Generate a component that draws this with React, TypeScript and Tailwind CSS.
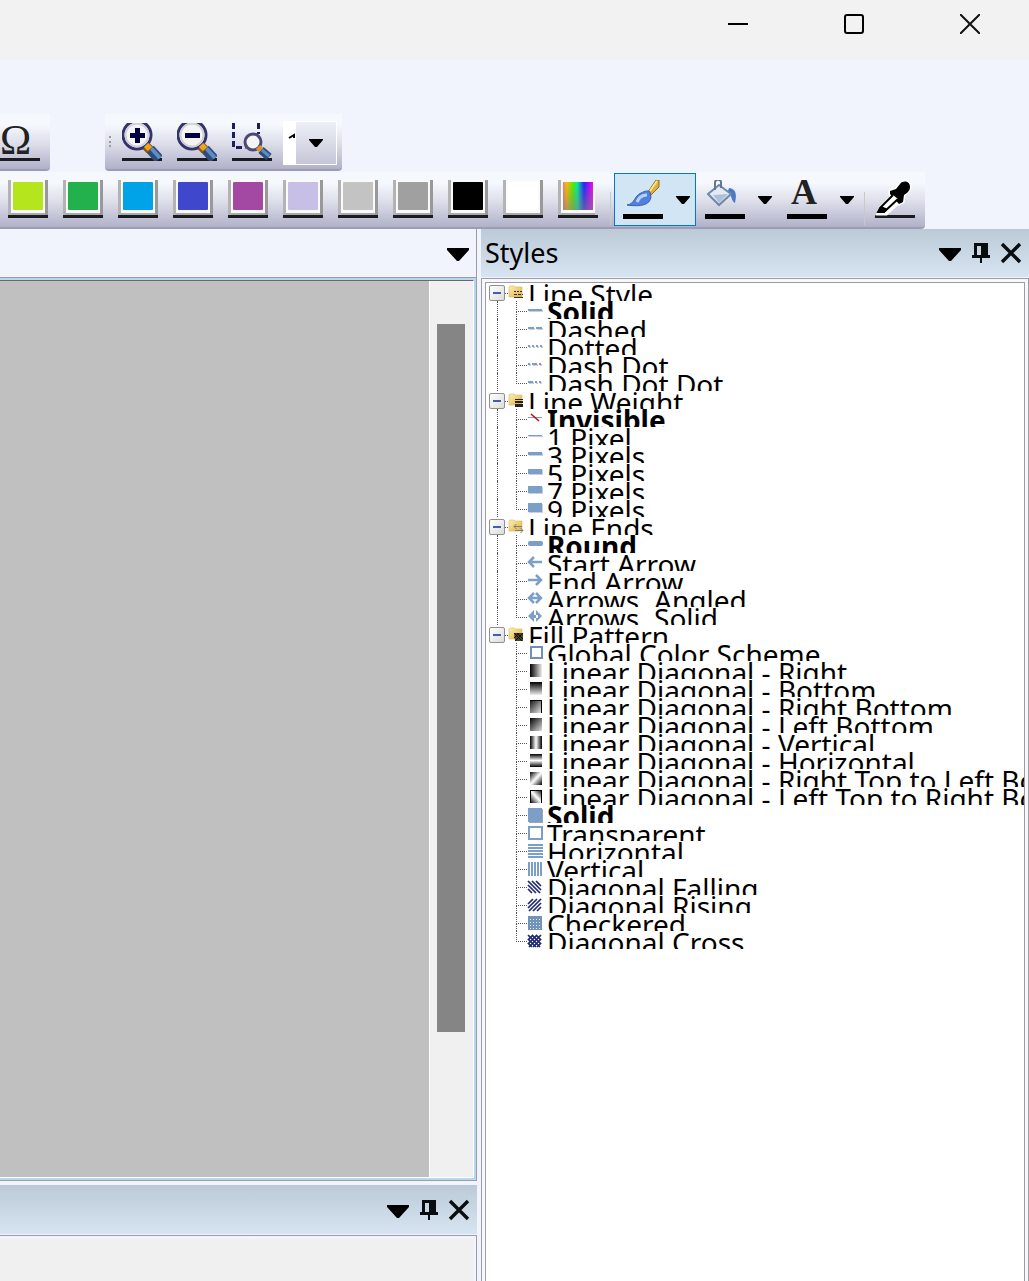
import React, { useState } from 'react';

const BLUE = '#7b9fc9';

const swatches = [
  { name: 'Lime', color: '#b5e61d' },
  { name: 'Green', color: '#22b14c' },
  { name: 'Turquoise', color: '#00a2e8' },
  { name: 'Indigo', color: '#3f48cc' },
  { name: 'Purple', color: '#a349a4' },
  { name: 'Lavender', color: '#c8bfe7' },
  { name: 'Light gray', color: '#c3c3c3' },
  { name: 'Gray', color: '#a0a0a0' },
  { name: 'Black', color: '#000000' },
  { name: 'White', color: '#ffffff' },
];

interface Item {
  label: string;
  icon: string;
  bold?: boolean;
}

interface Group {
  label: string;
  icon: string;
  items: Item[];
}

const groups: Group[] = [
  {
    label: 'Line Style',
    icon: 'style',
    items: [
      { label: 'Solid', icon: 'solid', bold: true },
      { label: 'Dashed', icon: 'dashed' },
      { label: 'Dotted', icon: 'dotted' },
      { label: 'Dash Dot', icon: 'dashdot' },
      { label: 'Dash Dot Dot', icon: 'dashdotdot' },
    ],
  },
  {
    label: 'Line Weight',
    icon: 'weight',
    items: [
      { label: 'Invisible', icon: 'invisible', bold: true },
      { label: '1 Pixel', icon: 'w1' },
      { label: '3 Pixels', icon: 'w3' },
      { label: '5 Pixels', icon: 'w5' },
      { label: '7 Pixels', icon: 'w7' },
      { label: '9 Pixels', icon: 'w9' },
    ],
  },
  {
    label: 'Line Ends',
    icon: 'ends',
    items: [
      { label: 'Round', icon: 'round', bold: true },
      { label: 'Start Arrow', icon: 'start' },
      { label: 'End Arrow', icon: 'end' },
      { label: 'Arrows, Angled', icon: 'angled' },
      { label: 'Arrows, Solid', icon: 'arrows' },
    ],
  },
  {
    label: 'Fill Pattern',
    icon: 'fill',
    items: [
      { label: 'Global Color Scheme', icon: 'global' },
      { label: 'Linear Diagonal - Right', icon: 'gRight' },
      { label: 'Linear Diagonal - Bottom', icon: 'gBottom' },
      { label: 'Linear Diagonal - Right Bottom', icon: 'gRightBottom' },
      { label: 'Linear Diagonal - Left Bottom', icon: 'gLeftBottom' },
      { label: 'Linear Diagonal - Vertical', icon: 'gVertical' },
      { label: 'Linear Diagonal - Horizontal', icon: 'gHorizontal' },
      { label: 'Linear Diagonal - Right Top to Left Bottom', icon: 'gRightTop' },
      { label: 'Linear Diagonal - Left Top to Right Bottom', icon: 'gLeftTop' },
      { label: 'Solid', icon: 'box', bold: true },
      { label: 'Transparent', icon: 'transparent' },
      { label: 'Horizontal', icon: 'hlines' },
      { label: 'Vertical', icon: 'vlines' },
      { label: 'Diagonal Falling', icon: 'falling' },
      { label: 'Diagonal Rising', icon: 'rising' },
      { label: 'Checkered', icon: 'checkered' },
      { label: 'Diagonal Cross', icon: 'cross' },
    ],
  },
];

const dashes: Record<string, [number, number][]> = {
  solid: [[1, 14]],
  dashed: [[1, 6], [9, 6]],
  dotted: [[1, 2], [5, 2], [9, 2], [13, 2]],
  dashdot: [[1, 2], [5, 5], [12, 2]],
  dashdotdot: [[1, 5], [8, 2], [12, 2]],
};

// x1, y1, x2, y2 and the colour stops
const gradients: Record<string, [number, number, number, number, string[]]> = {
  gRight: [0, 0, 1, 0, ['#000', '#eee']],
  gBottom: [0, 0, 0, 1, ['#000', '#eee']],
  gRightBottom: [0, 0, 1, 1, ['#111', '#eee']],
  gLeftBottom: [0, 0, 1, 1, ['#000', '#ddd']],
  gVertical: [0, 0, 1, 0, ['#000', '#fff', '#000']],
  gHorizontal: [0, 0, 0, 1, ['#000', '#fff', '#000']],
  gRightTop: [0, 0, 1, 1, ['#000', '#fff', '#000']],
  gLeftTop: [1, 0, 0, 1, ['#000', '#fff', '#000']],
};

function ItemShape({ icon }: { icon: string }) {
  if (dashes[icon]) {
    return (
      <>
        {dashes[icon].map(([x, w]) => (
          <g key={x}>
            <rect x={x + 1} y="9" width={w} height="2" fill="#c9cfdc" />
            <rect x={x} y="8" width={w} height="2" fill={BLUE} />
          </g>
        ))}
      </>
    );
  }
  if (/^w\d$/.test(icon)) {
    const w = Number(icon[1]);
    const y = 8 - (w - 1) / 2;
    return (
      <>
        <rect x="2" y={y + 1} width="14" height={w} fill="#c9cfdc" />
        <rect x="1" y={y} width="14" height={w} fill={BLUE} />
      </>
    );
  }
  if (gradients[icon]) {
    const [x1, y1, x2, y2, stops] = gradients[icon];
    return (
      <>
        <defs>
          <linearGradient id={icon} x1={x1} y1={y1} x2={x2} y2={y2}>
            {stops.map((c, i) => (
              <stop key={i} offset={i / (stops.length - 1)} stopColor={c} />
            ))}
          </linearGradient>
        </defs>
        <rect x="3" y="3" width="12" height="13" fill={`url(#${icon})`} />
        {icon === 'gRightBottom' && <path d="M3 3.500h12M14.500 3v13" stroke="#000" />}
        {icon === 'gLeftTop' && <path d="M3.500 16V3.500h11V16" stroke="#000" fill="none" />}
      </>
    );
  }
  switch (icon) {
    case 'invisible':
      return (
        <>
          <path d="M1 8.500h14" stroke={BLUE} />
          <path d="M4 5l8 7" stroke="#d00000" strokeWidth="1.5" shapeRendering="auto" />
        </>
      );
    case 'round':
      return <rect x="1" y="6" width="15" height="5" rx="2" fill={BLUE} shapeRendering="auto" />;
    case 'start':
      return <path d="M15 9H3M7 4L2 9l5 5" stroke={BLUE} strokeWidth="2.5" fill="none" shapeRendering="auto" />;
    case 'end':
      return <path d="M1 9h12M9 4l5 5-5 5" stroke={BLUE} strokeWidth="2.5" fill="none" shapeRendering="auto" />;
    case 'angled':
      return (
        <path d="M3 9h10M7 4L2 9l5 5M9 4l5 5-5 5" stroke={BLUE} strokeWidth="2.5" fill="none" shapeRendering="auto" />
      );
    case 'arrows':
      return <path d="M1 9l6-6v12zM15 9L9 3v12zM5 8h6v3H5z" fill={BLUE} shapeRendering="auto" />;
    case 'global':
      return <rect x="4" y="4" width="11" height="11" stroke="#6f8fbf" strokeWidth="2" fill="#fff" />;
    case 'box':
      return (
        <>
          <rect x="2" y="4" width="14" height="14" fill="#9aa8ba" />
          <rect x="1" y="3" width="14" height="14" fill={BLUE} />
        </>
      );
    case 'transparent':
      return <rect x="2" y="4" width="13" height="12" stroke={BLUE} strokeWidth="2" fill="#fff" />;
    case 'hlines':
      return <path d="M1 4h15M1 7h15M1 10h15M1 13h15M1 16h15" stroke={BLUE} strokeWidth="2" />;
    case 'vlines':
      return <path d="M2 3v14M5 3v14M8 3v14M11 3v14M14 3v14" stroke={BLUE} strokeWidth="2" />;
    case 'checkered':
      return (
        <>
          <rect x="1" y="3" width="14" height="14" fill="#7392b8" />
          <path d="M3 6h11M3 9h11M3 12h11M3 15h11" stroke="#e6edf6" strokeWidth="1" strokeDasharray="1 2" />
        </>
      );
    default:
      return (
        <g stroke="#1e2a6b" strokeWidth="1.7" shapeRendering="auto">
          {icon !== 'rising' && <path d="M1 12l4 4M1 8l8 8M1 4l12 12M5 4l9 9M9 4l5 5" />}
          {icon !== 'falling' && <path d="M14 12l-4 4M14 8l-8 8M14 4L2 16M10 4l-9 9M6 4L1 9" />}
        </g>
      );
  }
}

function ItemIcon({ icon }: { icon: string }) {
  return (
    <svg className="w-4 h-[18px] shrink-0" viewBox="0 0 16 18" shapeRendering="crispEdges" aria-hidden="true">
      <ItemShape icon={icon} />
    </svg>
  );
}

function FolderIcon({ icon }: { icon: string }) {
  return (
    <svg className="w-4 h-[18px] shrink-0" viewBox="0 0 16 18" aria-hidden="true">
      <defs>
        <linearGradient id={`folder-${icon}`} x1="0" y1="0" x2="1" y2="1">
          <stop offset="0" stopColor="#fdf0b8" />
          <stop offset="1" stopColor="#e0b03a" />
        </linearGradient>
      </defs>
      <path d="M1 4l1-1h4l1 1h7v10H1z" fill={`url(#folder-${icon})`} stroke="#d9b65a" strokeWidth="0.6" />
      {icon === 'style' && (
        <g stroke="#333" shapeRendering="crispEdges">
          <path d="M6 8.500h9" strokeDasharray="2 1" />
          <path d="M6 11.500h9" strokeDasharray="3 1" />
          <path d="M6 14.500h9" />
        </g>
      )}
      {icon === 'weight' && (
        <g stroke="#222" shapeRendering="crispEdges">
          <path d="M7 8.500h8" />
          <path d="M7 11h8" strokeWidth="2" />
          <path d="M7 14.500h8" strokeWidth="3" />
        </g>
      )}
      {icon === 'ends' && (
        <path
          d="M14 9.500H6M8.500 7L6 9.500 8.500 12M7 13.500h8M12.500 11l2.500 2.500-2.500 2.500"
          stroke="#7d7d7d"
          fill="none"
        />
      )}
      {icon === 'fill' && (
        <>
          <path d="M6 8h9v8H7z" fill="#4d431f" />
          <path d="M6 8l8 8M9 8l6 6M15 8l-8 8M11 8l-5 5" stroke="#111" />
        </>
      )}
    </svg>
  );
}

function TreeGroup({ group, last }: { group: Group; last: boolean }) {
  const [open, setOpen] = useState(true);

  return (
    <li role="treeitem" aria-expanded={open}>
      <div className="flex h-[18px] overflow-hidden">
        <button
          onClick={() => setOpen(!open)}
          aria-label={`Toggle ${group.label}`}
          className="ml-[3px] mt-[2px] w-4 h-4 shrink-0 flex items-center justify-center rounded-[2px] border border-[#8f8f8f] bg-linear-to-br from-white to-[#dcdcdc]"
        >
          <span className="w-2 h-[2px] bg-[#3f5fb0]" />
        </button>
        <span className="w-[3px] h-[11px] shrink-0 border-b border-dotted border-[#555]" />
        <FolderIcon icon={group.icon} />
        <span className="pl-1 leading-[22px]">{group.label}</span>
      </div>
      {open && (
        <ul role="group">
          {group.items.map((item, i) => (
            <li key={item.label} role="treeitem" className="flex h-[18px] overflow-hidden">
              <span
                className={`ml-[11px] w-[19px] shrink-0 border-l border-dotted ${
                  last ? 'border-transparent' : 'border-[#555]'
                }`}
              />
              <span className="w-[11px] shrink-0">
                <span className="block h-[11px] border-l border-b border-dotted border-[#555]" />
                {i < group.items.length - 1 && <span className="block h-[7px] border-l border-dotted border-[#555]" />}
              </span>
              <ItemIcon icon={item.icon} />
              <span className={`pl-1 leading-[22px] ${item.bold ? 'font-bold' : ''}`}>{item.label}</span>
            </li>
          ))}
        </ul>
      )}
    </li>
  );
}

function MenuArrow() {
  return (
    <svg className="w-6 h-5" viewBox="0 0 24 20" aria-hidden="true">
      <path d="M1 5h22v2L13 18h-2L1 7z" fill="#000" />
    </svg>
  );
}

function PanelButtons() {
  return (
    <div className="flex items-center gap-2 pr-[7px]">
      <button aria-label="Window position">
        <MenuArrow />
      </button>
      <button aria-label="Auto hide">
        <svg className="w-[22px] h-[22px]" viewBox="0 0 22 22" aria-hidden="true">
          <path d="M4 1h14v12h2v3h-8v5h-2v-5H2v-3h2zM7 4v9h4V4z" fillRule="evenodd" fill="#0a0d10" />
        </svg>
      </button>
      <button aria-label="Close panel">
        <svg className="w-[22px] h-[22px]" viewBox="0 0 22 22" aria-hidden="true">
          <path d="M2 2l18 18M20 2L2 20" stroke="#0a0d10" strokeWidth="3.4" />
        </svg>
      </button>
    </div>
  );
}

function DropArrow() {
  return (
    <svg className="w-[14px] h-2" viewBox="0 0 14 8" aria-hidden="true">
      <path d="M0 0h14v1L8 8H6L0 1z" fill="#000" />
    </svg>
  );
}

function Lens({ sign }: { sign: string }) {
  return (
    <svg className="w-10 h-[38px]" viewBox="0 0 40 38" aria-hidden="true">
      <path d="M0 36.500h40" stroke="#1b1b22" strokeWidth="3" />
      <circle cx="15" cy="12" r="14" fill="#f4f4f4" stroke="#34346a" strokeWidth="3" />
      <circle cx="15" cy="12" r="11.500" fill="none" stroke="#d0d0d8" strokeWidth="2" />
      <path d={sign} stroke="#00003f" strokeWidth="5" />
      <path d="M28 26l9 10" stroke="#2f4d7c" strokeWidth="10" />
      <path d="M29 25l9 10" stroke="#5f8cc4" strokeWidth="4" />
      <path d="M24 23l4 4" stroke="#8a5a10" strokeWidth="9" />
      <path d="M24 22l4 4" stroke="#efa420" strokeWidth="6" />
    </svg>
  );
}

function ColorTool({ label, active, children }: { label: string; active?: boolean; children: React.ReactNode }) {
  return (
    <div
      className={`flex h-[53px] w-[82px] border ${active ? 'border-[#0078d7] bg-[#d1e5f4]' : 'border-transparent'}`}
    >
      <button aria-label={label} className="pl-2 pt-[6px] flex flex-col">
        <svg className="w-10 h-[34px]" viewBox="0 0 40 34" aria-hidden="true">
          {children}
        </svg>
        <span className="block w-10 h-[5px] bg-black" />
      </button>
      <button aria-label={`${label} options`} className="flex-1 flex items-center justify-center pl-[7px]">
        <DropArrow />
      </button>
    </div>
  );
}

const bar =
  'bg-linear-to-b from-[#f5f8fd] from-20% via-[#dcdde9] via-55% to-[#b1b1c9] border-b-2 border-[#9c9cb4]';

export default function App() {
  return (
    <div className="min-h-screen flex flex-col overflow-hidden bg-[#f1f4fd] text-black font-['Noto_Sans','Open_Sans',sans-serif]">
      <header className="h-[60px] bg-[#f2f2f2] flex justify-end pb-3 pr-px">
        <button aria-label="Minimize" className="w-[116px] flex items-center justify-center">
          <svg className="w-5 h-5" viewBox="0 0 20 20" aria-hidden="true">
            <path d="M0 10h20" stroke="#000" strokeWidth="2" />
          </svg>
        </button>
        <button aria-label="Maximize" className="w-[116px] flex items-center justify-center">
          <svg className="w-5 h-5" viewBox="0 0 20 20" aria-hidden="true">
            <rect x="1" y="1" width="18" height="18" rx="2" stroke="#000" strokeWidth="2" fill="none" />
          </svg>
        </button>
        <button aria-label="Close" className="w-[116px] flex items-center justify-center">
          <svg className="w-5 h-5" viewBox="0 0 20 20" aria-hidden="true">
            <path d="M0 0l20 20M20 0L0 20" stroke="#111" strokeWidth="2" />
          </svg>
        </button>
      </header>

      <div className="pt-[54px] flex gap-[55px]">
        <div className={`w-[50px] h-[57px] rounded-br-[4px] pt-[6px] ${bar}`}>
          <button
            aria-label="Insert symbol"
            className="w-10 h-[41px] border-b-[3px] border-[#1b1b22] text-[42px] leading-[40px] font-['Liberation_Serif',serif] text-[#222] text-left"
          >
            Ω
          </button>
        </div>
        <div className={`w-[237px] h-[57px] rounded-b-[4px] flex items-start pt-[7px] ${bar}`}>
          <span className="ml-1 mt-[15px] w-[2px] h-[11px] border-l-2 border-dotted border-[#9a9aa5]" />
          <div className="flex gap-[15px] ml-[11px] pt-[2px]">
            <button aria-label="Zoom in">
              <Lens sign="M8 12.500h15M15.500 5v15" />
            </button>
            <button aria-label="Zoom out">
              <Lens sign="M8 12.500h15" />
            </button>
            <button aria-label="Zoom to selection">
              <svg className="w-10 h-[38px]" viewBox="0 0 40 38" aria-hidden="true">
                <path d="M0 36.500h40" stroke="#1b1b22" strokeWidth="3" />
                <path
                  d="M1.500 0v24.500h12M26.500 0v11"
                  stroke="#1c1c60"
                  strokeWidth="3"
                  strokeDasharray="6 3"
                  fill="none"
                />
                <circle cx="21" cy="19" r="8" fill="#f4f4f4" stroke="#4a4a74" strokeWidth="3" />
                <path d="M29 27l8 7" stroke="#2f4d7c" strokeWidth="8" />
                <path d="M30 27l7 6" stroke="#5f8cc4" strokeWidth="3" />
                <path d="M26 24l3 3" stroke="#dd9420" strokeWidth="6" />
              </svg>
            </button>
          </div>
          <div className="relative ml-[11px] w-[54px] h-11 border border-white bg-white flex justify-end">
            <select
              aria-label="Zoom level"
              className="absolute inset-0 w-full h-full appearance-none opacity-0"
              defaultValue="100"
            >
              <option value="100">100%</option>
            </select>
            <svg className="w-[12px] h-full" viewBox="0 0 12 42" aria-hidden="true">
              <path d="M5 16l5-3v3" stroke="#000" strokeWidth="2" fill="none" />
            </svg>
            <span className="w-10 bg-linear-to-b from-[#eef0f7] to-[#c5c7d8] flex items-center justify-center">
              <DropArrow />
            </span>
          </div>
        </div>
      </div>

      <div className={`mt-px w-[925px] h-[57px] rounded-br-[4px] flex items-start ${bar}`}>
        <div className="flex gap-[15px] pl-2 pt-2">
          {swatches.map((s) => (
            <button
              key={s.name}
              aria-label={s.name}
              className="w-10 h-[38px] border-b-[3px] border-[#1b1b22]"
            >
              <span className="h-full border-l-[3px] border-r-[3px] border-l-[#b3b3b3] border-r-[#999] bg-[#fafafa] flex flex-col items-center pt-[2px]">
                <span className="w-[30px] h-7 rounded-[1px]" style={{ backgroundColor: s.color }} />
                <span className="w-[34px] h-[2px] mt-[3px] bg-[#aaa]" />
              </span>
            </button>
          ))}
          <button aria-label="More colors" className="w-10 h-[38px] border-b-[3px] border-[#1b1b22]">
            <span className="h-full w-[37px] border-l-[3px] border-[#b3b3b3] flex flex-col">
              <span className="w-[34px] bg-[#fafafa] pt-[2px] pb-[3px] pl-[2px]">
                <span className="block w-[30px] h-7 bg-[linear-gradient(to_bottom,transparent,#80808099),linear-gradient(to_right,#f77,#fb0_12%,#5e0_33%,#0e9_48%,#22f_70%,#f0e)]" />
              </span>
              <span className="w-[34px] h-[2px] bg-[#aaa]" />
            </span>
          </button>
        </div>
        <span className="ml-3 mt-5 w-px h-[33px] bg-[#c9c9c9]" />
        <div className="flex ml-[3px] pt-px">
          <ColorTool label="Line color" active>
            <path d="M25 12L33 0h3v7l-9 9z" fill="#e5ad32" stroke="#8c6a28" />
            <path d="M27 11l7-10" stroke="#ffe28a" strokeWidth="2" />
            <path d="M4 25c8-1 7-9 14-12 4-2 7-3 9-1l1 5c-1 8-10 10-24 8z" fill="#4f80dd" stroke="#3b62ad" />
            <path d="M14 22c2-4 4-7 10-7" stroke="#b9d2fb" strokeWidth="3" fill="none" />
          </ColorTool>
          <ColorTool label="Fill color">
            <path d="M24 8c7 1 8 6 6 15-4-2-3-8-7-12z" fill="#4c78c4" />
            <path d="M3 14L14 5l12 9-12 11z" fill="#e3eaf4" stroke="#6f87a8" strokeWidth="2" />
            <path d="M8 15l6 8 9-9z" fill="#aebfd6" />
            <path d="M10 10V2c1-4 6-2 6 0v6" stroke="#66788f" strokeWidth="2" fill="none" />
          </ColorTool>
          <ColorTool label="Text color">
            <text
              x="17"
              y="24"
              textAnchor="middle"
              fontFamily="Liberation Serif, serif"
              fontWeight="bold"
              fontSize="36"
              fill="#222"
            >
              A
            </text>
          </ColorTool>
        </div>
        <span className="ml-1 mt-5 w-px h-[33px] bg-[#c9c9c9]" />
        <button aria-label="Pick color" className="ml-[10px] mt-2">
          <svg className="w-10 h-[38px]" viewBox="0 0 40 38" aria-hidden="true">
            <path d="M0 36.500h40" stroke="#1b1b22" strokeWidth="3" />
            <path d="M5 30L20 14l5 6L11 33H4z" fill="#fff" stroke="#fff" strokeWidth="5" />
            <path
              d="M15 11l6-2 4-5c3-4 10-3 10 3 0 4-3 6-6 8l-1 7-4 2-9-10z"
              fill="#000"
              stroke="#fff"
              strokeWidth="3"
              paintOrder="stroke"
            />
            <path d="M18 15L5 28l-2 4h6l14-13" fill="#fff" stroke="#000" strokeWidth="2" />
            <path d="M6 26l7 3-4 4H2z" fill="#000" />
          </svg>
        </button>
      </div>

      <main className="flex-1 flex">
        <div className="flex-1 min-w-0 flex flex-col">
          <section className="flex-1 flex flex-col border-r border-b border-[#9d9da1]">
            <div className="h-[49px] flex items-center justify-end pr-[6px] border-b border-[#9d9da1]">
              <button aria-label="Open documents">
                <MenuArrow />
              </button>
            </div>
            <div className="flex-1 flex border-t-2 border-r-2 border-b-2 border-[#b5d9f0]">
              <div className="flex-1 flex border-t border-t-[#696969] border-r border-b border-r-white border-b-white">
                <div className="flex-1 bg-[#c0c0c0]" />
                <div className="w-11 bg-[#f0f0f0] border-l border-white flex flex-col items-center">
                  <div className="mt-[43px] h-[79%] w-7 bg-[#858585] -ml-px" />
                </div>
              </div>
            </div>
          </section>
          <section className="mt-1 h-24 flex flex-col">
            <div className="h-[49px] flex items-center justify-end bg-linear-to-b from-[#bccad8] to-[#d7e4f2]">
              <PanelButtons />
            </div>
            <div className="mt-px flex-1 border-t border-r border-[#9d9da1] pt-[3px] pr-[3px] flex">
              <div className="flex-1 bg-[#f0f0f0]" />
            </div>
          </section>
        </div>

        <aside className="ml-1 w-[548px] flex flex-col min-w-0">
          <div className="h-[48px] flex items-center justify-between bg-linear-to-b from-[#bccad8] to-[#d7e4f2]">
            <h2 className="pl-1 text-[27px] leading-8">Styles</h2>
            <PanelButtons />
          </div>
          <div className="mt-px flex-1 bg-[#f7f8fd] border-t border-x border-[#9d9da1] pt-[3px] px-[3px] flex">
            <ul
              role="tree"
              aria-label="Styles"
              className="flex-1 min-w-0 overflow-hidden bg-white border-t border-x border-[#9d9da1] text-[28px] whitespace-nowrap"
            >
              {groups.map((g, i) => (
                <TreeGroup key={g.label} group={g} last={i === groups.length - 1} />
              ))}
            </ul>
          </div>
        </aside>
      </main>
    </div>
  );
}
